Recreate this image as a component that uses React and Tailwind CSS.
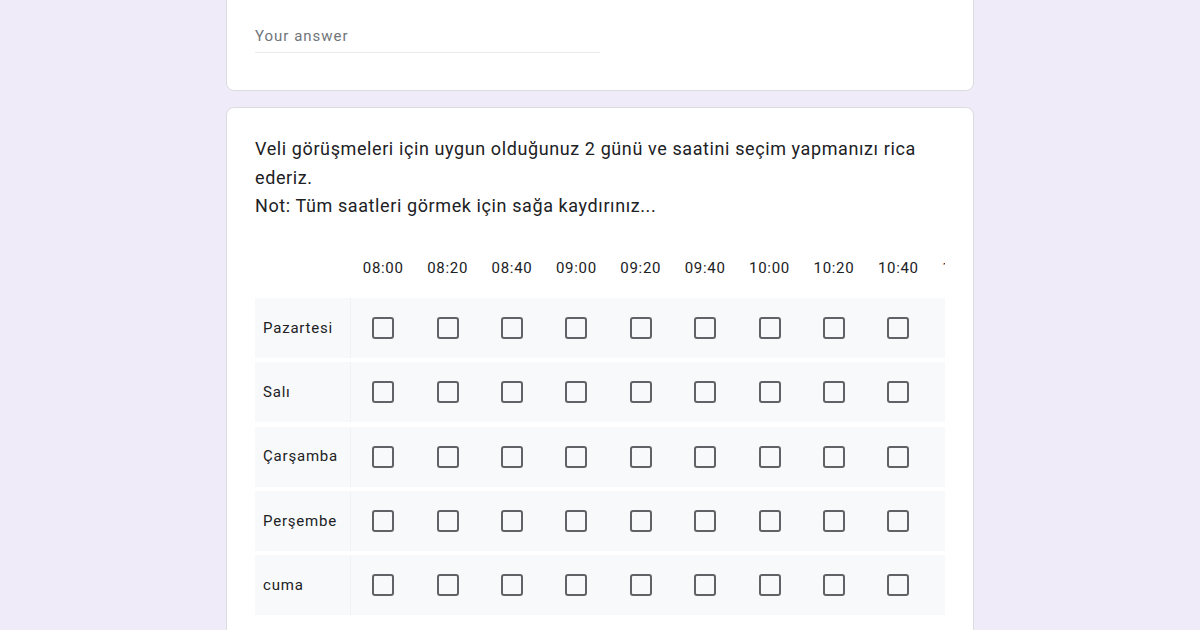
import React from 'react';

const times = ['08:00', '08:20', '08:40', '09:00', '09:20', '09:40', '10:00', '10:20', '10:40', '11:00', '11:20'];
const days = ['Pazartesi', 'Salı', 'Çarşamba', 'Perşembe', 'cuma'];

function Checkbox() {
  return <div className="w-[22px] h-[22px] rounded-[3px] border-2 border-[#5f6368]" />;
}

export default function App() {
  return (
    <div className="h-[630px] overflow-hidden bg-[#f0ebf8] font-['Roboto',sans-serif] text-[#202124]">
      {/* previous question card */}
      <div className="w-[748px] mx-auto -mt-4 bg-white rounded-lg border border-[#dadce0] px-7 pt-[39px] pb-[37px]">
        <div className="w-[345px] border-b border-[#e8eaed] pb-[4px]">
          <span className="text-[15px] tracking-[1px] text-[#70757a]">Your answer</span>
        </div>
      </div>

      {/* grid question card */}
      <div className="w-[748px] mx-auto mt-4 bg-white rounded-lg border border-[#dadce0] px-7 pt-[27px] pb-10">
        <div className="text-[18px] leading-[28.5px] tracking-[0.6px]">
          <p>Veli görüşmeleri için uygun olduğunuz 2 günü ve saatini seçim yapmanızı rica ederiz.</p>
          <p>Not: Tüm saatleri görmek için sağa kaydırınız...</p>
        </div>

        <div className="mt-[22px] w-[690px] overflow-hidden">
          <div className="w-max">
            <div className="flex h-[51px] items-center">
              <div className="w-[96px] shrink-0" />
              {times.map((t) => (
                <div key={t} className="w-[64.4px] shrink-0 text-center text-[15px] tracking-[0.7px]">
                  {t}
                </div>
              ))}
            </div>
            {days.map((d) => (
              <div key={d} className="flex h-[60px] items-center bg-[#f8f9fa] mt-[4.4px] first:mt-0">
                <div className="w-[96px] shrink-0 pl-2 text-[15px] tracking-[0.8px] h-full flex items-center border-r border-[#f1f2f4]">
                  {d}
                </div>
                {times.map((t) => (
                  <div key={t} className="w-[64.4px] shrink-0 flex justify-center">
                    <Checkbox />
                  </div>
                ))}
              </div>
            ))}
          </div>
        </div>
      </div>
    </div>
  );
}
